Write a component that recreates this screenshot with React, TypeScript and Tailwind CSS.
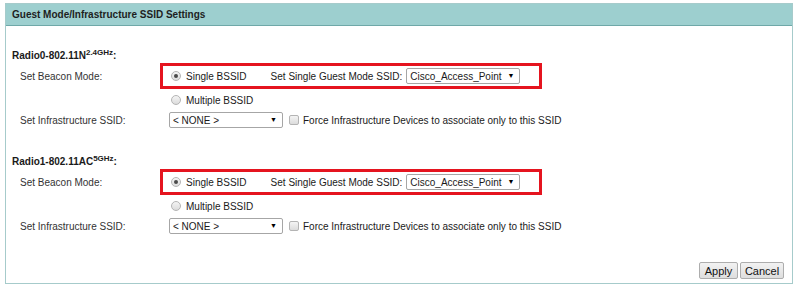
import type { ReactNode } from 'react'

function Radio({ checked }: { checked?: boolean }) {
  return (
    <span className="flex h-[10px] w-[10px] shrink-0 items-center justify-center rounded-full border border-[#b4b4b4] bg-gradient-to-b from-[#f4f4f4] to-[#dcdcdc]">
      {checked && <span className="h-[4px] w-[4px] rounded-full bg-[#4a4a4a]" />}
    </span>
  )
}

function Select({ value }: { value: string }) {
  return (
    <span className="flex h-[16px] w-[114px] shrink-0 items-center justify-between rounded-[2px] border border-[#a6a6a6] bg-white pl-[3px] pr-[5px] text-[10px] text-[#1a1a1a]">
      <span>{value}</span>
      <span className="text-[7px] text-black">▼</span>
    </span>
  )
}

function Heading({ name, band }: { name: string; band: string }) {
  return (
    <div className="flex h-[14px] items-end pl-[6px] pb-[2px] text-[10px] font-bold leading-[10px] text-[#1a1a1a]">
      {name}
      <span className="relative -top-[4px] text-[8px] leading-[8px]">{band}</span>:
    </div>
  )
}

function Row({ label, className, children }: { label?: string; className: string; children: ReactNode }) {
  return (
    <div className={'flex items-center pl-[14px] ' + className}>
      <span className="w-[140px] shrink-0 text-[#333]">{label}</span>
      {children}
    </div>
  )
}

function RadioSection({ name, band }: { name: string; band: string }) {
  return (
    <div>
      <Heading name={name} band={band} />
      <Row label="Set Beacon Mode:" className="h-[26px]">
        <div className="flex h-[26px] w-[382px] items-center border-[3px] border-[#e5141f] pl-[8px]">
          <Radio checked />
          <span className="ml-[5px] text-[#1a1a1a]">Single BSSID</span>
          <span className="ml-[24px] text-[#1a1a1a]">Set Single Guest Mode SSID:</span>
          <span className="ml-[4px]">
            <Select value="Cisco_Access_Point" />
          </span>
        </div>
      </Row>
      <Row className="h-[22px]">
        <span className="ml-[11px]">
          <Radio />
        </span>
        <span className="ml-[5px] text-[#1a1a1a]">Multiple BSSID</span>
      </Row>
      <Row label="Set Infrastructure SSID:" className="h-[18px]">
        <span className="ml-[9px]">
          <Select value="< NONE >" />
        </span>
        <span className="ml-[6px] h-[10px] w-[10px] rounded-[2px] border border-[#b4b4b4] bg-gradient-to-b from-[#f4f4f4] to-[#dcdcdc]" />
        <span className="ml-[4px] text-[#1a1a1a]">Force Infrastructure Devices to associate only to this SSID</span>
      </Row>
    </div>
  )
}

export default function App() {
  return (
    <div className="h-[290px] w-[800px] bg-white pt-[3px] font-['Liberation_Sans',Arial,sans-serif] text-[10px]">
      <div className="ml-[5px] w-[788px] border border-[#a6cbcb]">
        <div className="flex h-[22px] items-center border-b border-[#6fa8a8] bg-[#9dcfcf] pl-[6px] text-[10px] font-bold text-[#1e1e1e]">
          Guest Mode/Infrastructure SSID Settings
        </div>
        <div className="pt-[23px]">
          <RadioSection name="Radio0-802.11N" band="2.4GHz" />
          <div className="mt-[26px]">
            <RadioSection name="Radio1-802.11AC" band="5GHz" />
          </div>
          <div className="mt-[27px] flex justify-end gap-[2px] pb-[4px] pr-[8px]">
            <button className="h-[17px] w-[39px] rounded-[2px] border border-[#adadad] bg-gradient-to-b from-[#f2f2f2] to-[#dedede] text-[11px] text-[#111]">
              Apply
            </button>
            <button className="h-[17px] w-[44px] rounded-[2px] border border-[#adadad] bg-gradient-to-b from-[#f2f2f2] to-[#dedede] text-[11px] text-[#111]">
              Cancel
            </button>
          </div>
        </div>
      </div>
    </div>
  )
}
